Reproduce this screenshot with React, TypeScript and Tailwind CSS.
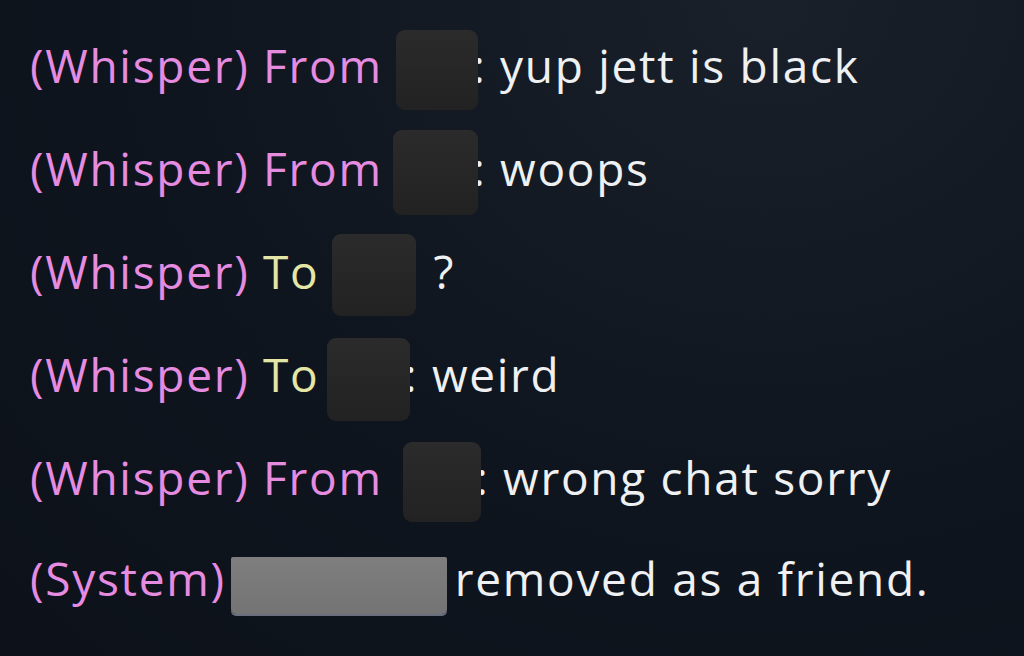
const pink = "text-[#e68ce0]";
const yellow = "text-[#e4e6a6]";
const white = "text-[#eef0f2]";

function Blot({ className }: { className: string }) {
  return (
    <span
      className={`relative z-10 inline-block shrink-0 rounded-[9px] bg-gradient-to-b from-[#2b2b2c] to-[#222223] ${className}`}
    />
  );
}

export default function App() {
  return (
    <div
      className="h-[656px] w-[1024px] overflow-hidden bg-[radial-gradient(ellipse_at_75%_0%,#19202a_0%,#0f151e_55%,#0c111a_100%)] pt-[13px] pl-[30px] text-[46px] leading-none tracking-[1.7px]"
      style={{ fontFamily: '"Open Sans", "Liberation Sans", sans-serif' }}
    >
      <div className="flex h-[103px] items-center whitespace-pre">
        <span className={pink}>(Whisper) From</span>
        <Blot className="ml-[13px] mt-[10px] h-[80px] w-[82px]" />
        <span className={`${white} -ml-[5px]`}>: yup jett is black</span>
      </div>
      <div className="flex h-[103px] items-center whitespace-pre">
        <span className={pink}>(Whisper) From</span>
        <Blot className="ml-[10px] mt-[10px] h-[85px] w-[85px]" />
        <span className={`${white} -ml-[5px]`}>: woops</span>
      </div>
      <div className="flex h-[103px] items-center whitespace-pre">
        <span className={pink}>(Whisper) </span>
        <span className={yellow}>To</span>
        <Blot className="ml-[12px] mt-[8px] h-[82px] w-[84px]" />
        <span className={`${white} ml-[18px]`}>?</span>
      </div>
      <div className="flex h-[103px] items-center whitespace-pre">
        <span className={pink}>(Whisper) </span>
        <span className={yellow}>To</span>
        <Blot className="ml-[7px] mt-[12px] h-[83px] w-[83px]" />
        <span className={`${white} -ml-[5px]`}>: weird</span>
      </div>
      <div className="flex h-[103px] items-center whitespace-pre">
        <span className={pink}>(Whisper) From</span>
        <Blot className="ml-[20px] mt-[10px] h-[80px] w-[78px]" />
        <span className={`${white} -ml-[5px]`}>: wrong chat sorry</span>
      </div>
      <div className="flex h-[100px] items-center whitespace-pre">
        <span className={pink}>(System)</span>
        <span className="relative z-10 ml-[5px] mt-[14px] inline-block h-[57px] w-[216px] shrink-0 rounded-b-[5px] rounded-t-[2px] bg-gradient-to-b from-[#7e7e7f] to-[#747475] shadow-[0_2px_0_#6a6f80]" />
        <span className={`${white} ml-[8px]`}>removed as a friend.</span>
      </div>
    </div>
  );
}
